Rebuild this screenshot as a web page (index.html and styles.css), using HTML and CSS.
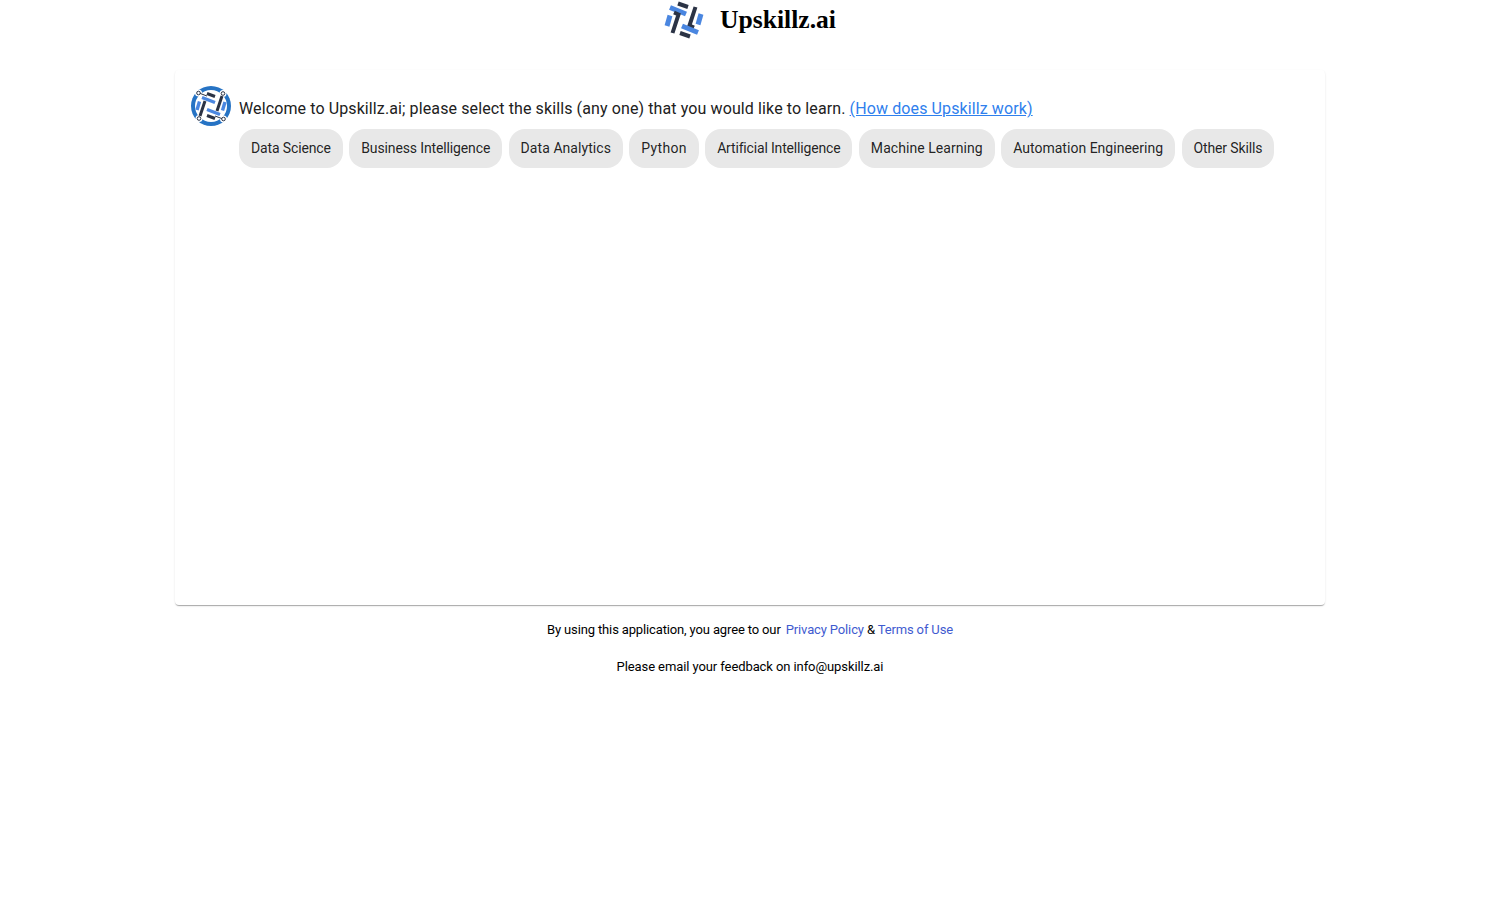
FILE: index.html
```html
<!DOCTYPE html>
<html lang="en">
<head>
<meta charset="utf-8">
<title>Upskillz.ai</title>
<link rel="stylesheet" href="styles.css">
</head>
<body>
<header class="brand">
  <svg class="brand-logo" viewBox="0 0 40 40" aria-hidden="true">
    <g fill="none">
      <path class="dark" d="M14 3.500 24 7"/>
      <path class="blue" d="M6 7.500 22 14"/>
      <path class="dark" d="M31.500 7 25.500 25.500 30 27.500"/>
      <path class="blue" d="M37 14 34 24.500"/>
      <path class="dark" d="M26 36.500 16 33"/>
      <path class="blue" d="M34 32.500 18 26"/>
      <path class="dark" d="M8.500 33 14.500 14.500 10 12.500"/>
      <path class="blue" d="M3 26 6 15.500"/>
    </g>
  </svg>
  <span class="brand-name">Upskillz.ai</span>
</header>
<main class="card">
  <div class="message">
    <svg class="avatar" viewBox="0 0 40 40" aria-hidden="true">
      <circle cx="20" cy="20" r="20" fill="#2673c4"/>
      <circle cx="20" cy="20" r="16" fill="#fff"/>
      <circle cx="7.500" cy="7" r="3.500" fill="#fff"/>
      <circle cx="32" cy="7.500" r="3.500" fill="#fff"/>
      <circle cx="32.500" cy="33" r="3.500" fill="#fff"/>
      <circle cx="8" cy="32.500" r="3.500" fill="#fff"/>
      <g fill="none">
        <path class="a-dark" d="M16 7.500 24 10.500"/>
        <path class="a-blue" d="M11 11.500 24 16.500"/>
        <path class="a-line" d="M8 7 16 10"/>
        <circle class="a-node" cx="7.500" cy="7" r="1.800"/>
        <path class="a-dark" d="M31 10 26 25"/>
        <path class="a-blue" d="M34 16 31.500 24.500"/>
        <circle class="a-node" cx="32" cy="7.500" r="1.800"/>
        <path class="a-dark" d="M24 32.500 16 29.500"/>
        <path class="a-blue" d="M29 28.500 16 23.500"/>
        <path class="a-line" d="M32 33 24 30"/>
        <circle class="a-node" cx="32.500" cy="33" r="1.800"/>
        <path class="a-dark" d="M9 30 14 15"/>
        <path class="a-blue" d="M6 24 8.500 15.500"/>
        <circle class="a-node" cx="8" cy="32.500" r="1.800"/>
      </g>
    </svg>
    <p class="welcome">Welcome to Upskillz.ai; please select the skills (any one) that you would like to learn. <a href="#">(How does Upskillz work)</a></p>
  </div>
  <div class="chips">
    <button class="chip tight">Data Science</button>
    <button class="chip tight">Business Intelligence</button>
    <button class="chip wide">Data Analytics</button>
    <button class="chip wider">Python</button>
    <button class="chip tighter">Artificial Intelligence</button>
    <button class="chip wide">Machine Learning</button>
    <button class="chip snug">Automation Engineering</button>
    <button class="chip tight">Other Skills</button>
  </div>
</main>
<footer class="legal">
  <p class="agree">By using this application, you agree to our <a class="first" href="#">Privacy Policy</a> &amp; <a href="#">Terms of Use</a></p>
  <p class="feedback">Please email your feedback on info@upskillz.ai</p>
</footer>
</body>
</html>
```
FILE: styles.css
```css
* { box-sizing: border-box; }
html, body { margin: 0; padding: 0; background: #fff; }
body { font-family: Roboto, "Liberation Sans", sans-serif; color: #000; }

.brand {
  display: flex;
  justify-content: center;
  align-items: center;
  gap: 16px;
  height: 40px;
  margin-bottom: 30px;
}
.brand-logo { width: 40px; height: 40px; display: block; }
.dark { stroke: #2b3345; stroke-width: 4; }
.blue { stroke: #4a86e0; stroke-width: 5; }
.brand-name {
  font-family: "Liberation Serif", serif;
  font-weight: 700;
  font-size: 25.600px;
  line-height: 40px;
}

.card {
  width: 1150px;
  height: 535px;
  margin: 0 auto;
  padding: 16px;
  background: #fff;
  border-radius: 4px;
  box-shadow: 0 2px 1px -1px rgba(0,0,0,.2), 0 1px 1px 0 rgba(0,0,0,.14), 0 1px 3px 0 rgba(0,0,0,.06);
}
.message { display: flex; align-items: flex-start; gap: 8px; }
.avatar { width: 40px; height: 40px; display: block; flex: none; }
.a-dark { stroke: #2b3345; stroke-width: 3; }
.a-blue { stroke: #4a86e0; stroke-width: 3.400; }
.a-line { stroke: #2b3345; stroke-width: 1; }
.a-node { fill: #fff; stroke: #2b3345; stroke-width: 1; }
.welcome {
  margin: 13px 0 0;
  font-size: 16px;
  line-height: 20px;
  letter-spacing: .11px;
  color: #212121;
}
.welcome a { color: #2f80ed; text-decoration: underline; }

.chips {
  display: flex;
  gap: 6.400px;
  margin: 3px 0 0 48px;
}
.chip {
  height: 39px;
  padding: 0 12px 2px;
  border: 0;
  border-radius: 16px;
  background: #e8e8e8;
  font-family: Roboto, "Liberation Sans", sans-serif;
  font-size: 14px;
  color: rgba(0,0,0,.87);
}
.tight { letter-spacing: -.13px; }
.tighter { letter-spacing: -.17px; }
.snug { letter-spacing: .02px; }
.wide { letter-spacing: .06px; }
.wider { letter-spacing: .3px; }

.legal { text-align: center; font-size: 13px; line-height: 17px; padding-top: 16px; }
.legal p { margin: 0 0 20px; }
.agree { letter-spacing: -.14px; }
.feedback { letter-spacing: -.09px; }
.legal a { color: #3f5bd0; text-decoration: none; }
.legal .first { margin-left: 2px; }
```
